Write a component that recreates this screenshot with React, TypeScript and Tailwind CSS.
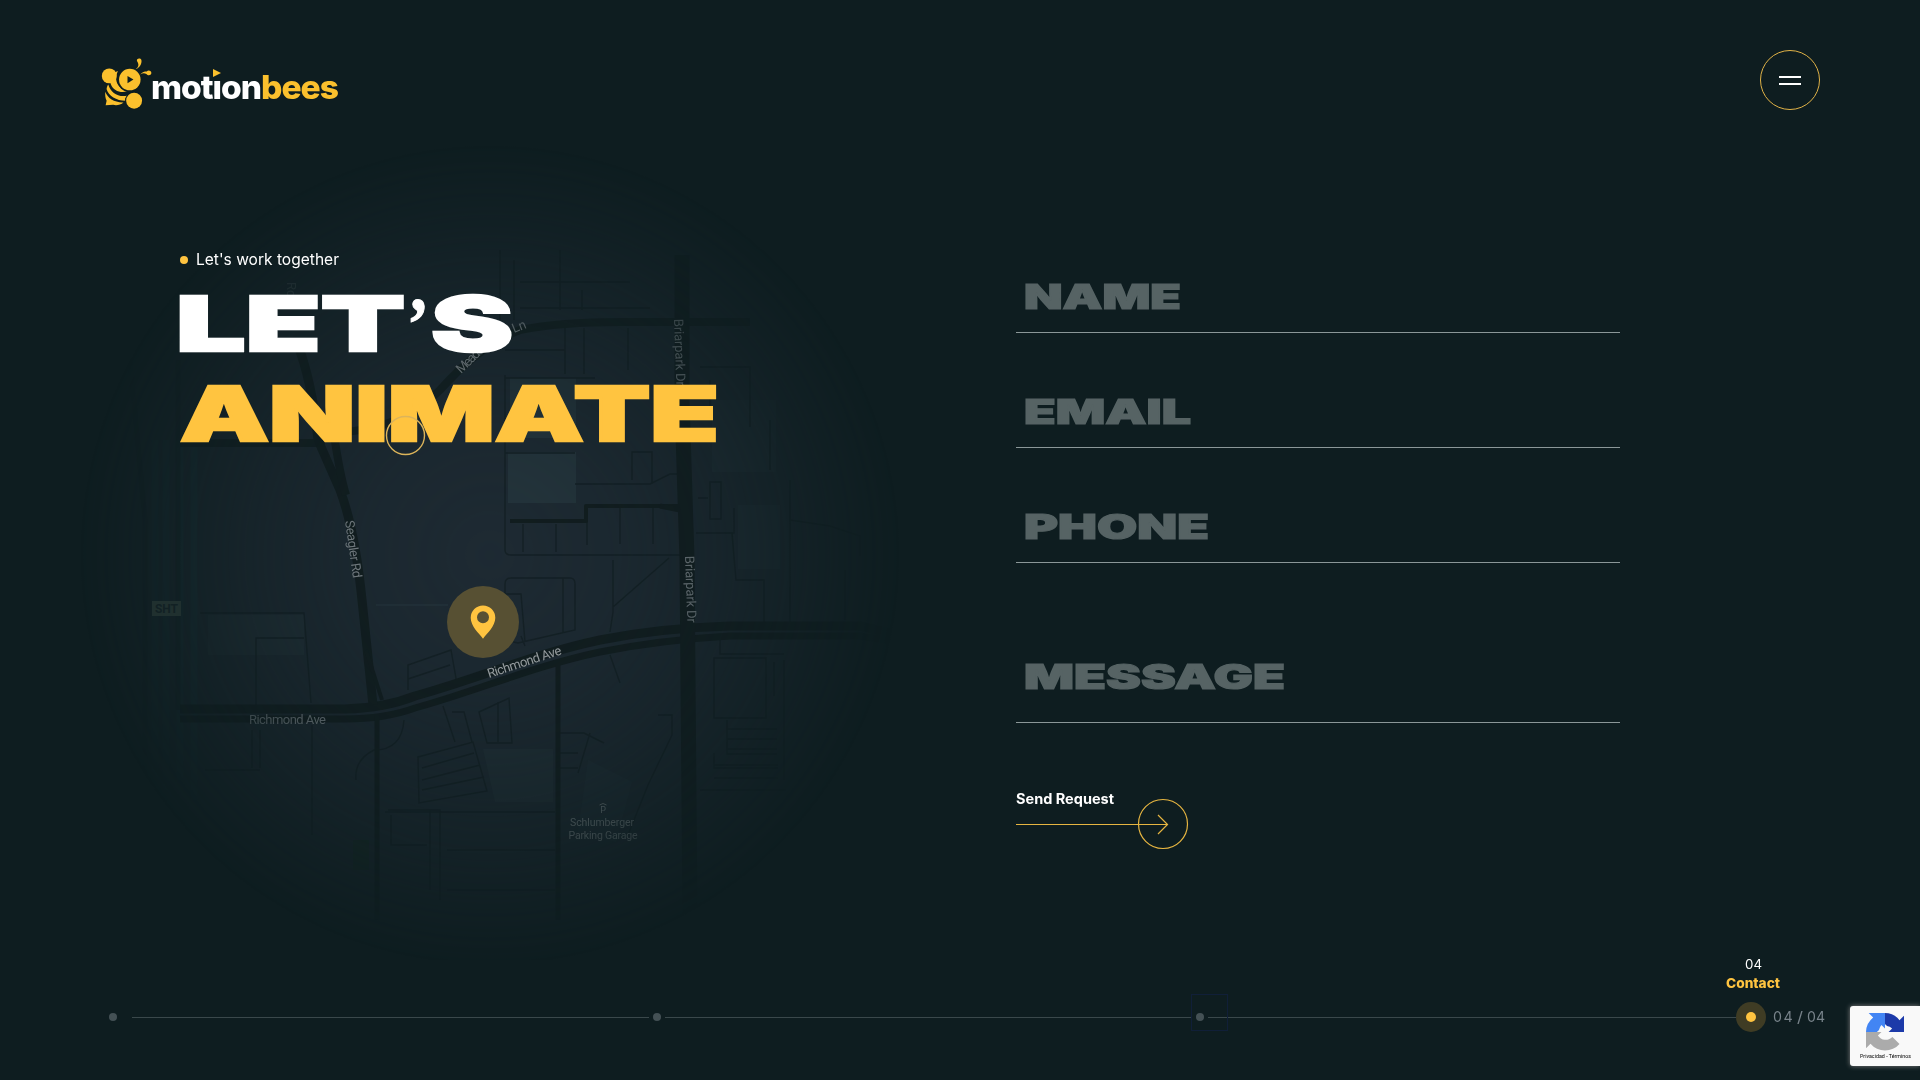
import { useLayoutEffect, useRef, type ReactNode } from "react";

/** Stretches its text horizontally so that it fills the width of its box. */
function Fit({ className, children }: { className: string; children: ReactNode }) {
  const box = useRef<HTMLSpanElement>(null);
  const text = useRef<HTMLSpanElement>(null);
  useLayoutEffect(() => {
    if (!box.current || !text.current) return;
    const scale = box.current.offsetWidth / text.current.getBoundingClientRect().width;
    text.current.style.transform = `scaleX(${scale})`;
  }, []);
  return (
    <span ref={box} className={`block shrink-0 whitespace-nowrap ${className}`}>
      <span ref={text} className="inline-block origin-left">
        {children}
      </span>
    </span>
  );
}

function Bee() {
  return (
    <svg viewBox="30 50 160 160" className="h-[53px] w-[53px]" fill="#fbc02d">
      <circle cx="58" cy="107" r="22.5" />
      <path d="M84 92 C64 99 57 116 63 133 C71 152 92 161 116 153 C96 149 84 138 80 124 C77 113 79 103 84 92 Z" />
      <path d="M55 133 C62 158 84 172 112 167 C107 172 104 176 107 182 C80 182 55 166 50 147 C50 142 52 137 55 133 Z" />
      <path d="M46 155 C53 175 74 188 101 187 C92 195 78 197 70 194 L47 196 L50 182 C46 174 45 165 46 155 Z" />
      <circle cx="133" cy="182" r="27" fill="#0e1d20" />
      <circle cx="133" cy="182" r="24" />
      <circle cx="120" cy="118" r="38" fill="#0e1d20" />
      <circle cx="120" cy="118" r="32.5" />
      <path d="M113 107 L131 118 L113 129 Z" fill="#0e1d20" />
      <path d="M137 87 C146 81 149 74 142 63 C138 54 152 51 155 59 C157 70 150 83 137 87 Z" />
      <path d="M151 103 C158 95 164 94 171 94 C175 88 186 91 185 99 C183 107 174 106 170 101 C163 98 158 99 151 103 Z" />
    </svg>
  );
}

function StreetMap() {
  return (
    <svg viewBox="80 120 860 840" className="absolute left-[80px] top-[120px] h-[840px] w-[860px] font-['Roboto']">
      <defs>
        <radialGradient id="fade" gradientUnits="userSpaceOnUse" cx="490" cy="555" r="410">
          <stop offset="0" stopColor="#fff" stopOpacity="0.95" />
          <stop offset="0.3" stopColor="#fff" stopOpacity="0.8" />
          <stop offset="0.6" stopColor="#fff" stopOpacity="0.5" />
          <stop offset="0.85" stopColor="#fff" stopOpacity="0.18" />
          <stop offset="1" stopColor="#fff" stopOpacity="0" />
        </radialGradient>
        <mask id="vignette" maskUnits="userSpaceOnUse" x="80" y="120" width="860" height="840">
          <rect x="80" y="120" width="860" height="840" fill="url(#fade)" />
        </mask>
      </defs>
      <g mask="url(#vignette)">
        <rect x="80" y="120" width="860" height="840" fill="#1f2b34" />
        <g fill="#26363e">
          <path d="M508 452h68v51h-68zM510 378h66v60h-66z" />
          <path d="M712 400h64v72h-64zM738 505h42v64h-42z" opacity="0.5" />
          <path d="M483 749h70v53h-58zM208 615h96v40h-96z" opacity="0.55" />
          <path d="M588 760l44 22-16 60-38-10z" opacity="0.4" />
        </g>
        <g fill="none" stroke="#152126" strokeWidth="1.4">
          <path d="M505 378h90M505 375v175q0 5 6 5h170M505 453h70M575 484h75l20-10h12M632 480v-28h20v32" />
          <path d="M523 524v28M556 524v28M587 520v25M620 508v36M653 508v36" />
          <path d="M505 640v-56q0-6 6-6h59q5 0 5 6v46l-57 13zM563 578v54M505 594h16l4 48M613 560v52l-3 20M613 607l56-49" />
          <path d="M610 655l10 28M525 646l-4-10" />
          <path d="M200 613h104l7 90M256 705v-67h48M260 730v38M252 730v38M312 725v110M205 770h55" />
          <path d="M408 690v-25l43-15 6 34M408 679l42-14M404 720q-2 30-30 30q-20 10-18 30" />
          <path d="M443 706l12 36M452 712h12l8 30M479 712l30-14 3 45h-25zM498 702v40" />
          <path d="M418 757l55-15 14 49-68 12zM422 768l52-15M422 780l58-15M422 790l62-13M388 810h52v90M391 815v30h36M430 810v80" />
          <path d="M385 812h170M447 850h108M447 890h108M560 733h24l20 10M560 753h18M560 768h18M590 733l-12 40" />
          <path d="M658 715h14v20l-24 50-20 50" />
          <path d="M710 482v37h11v-37zM698 498h10M696 533h38v-25M732 533l4 47h28v46M790 480v145M790 520l40 6 30 10v20M845 570v50" />
          <path d="M714 658v60h52v-60zM720 640v14h64M784 660v120M774 662v34M727 720v34h50M727 729h50M727 739h50M727 749h50M714 753v15h64M714 765h64M714 778h64M700 790h86" />
          <path d="M500 250v70M514 260v60M560 250v60M520 282h110M520 308h130M582 290v20M584 328v46M628 328v42M565 328v46M505 350h60M700 367h50v60M710 380v30M770 420v50" />
        </g>
        <g stroke="#1c343c" fill="none" strokeWidth="7" opacity="0.9">
          <path d="M155 440v360M194 430v370M166 440v350M180 440v340" />
        </g>
        <g stroke="#121d1f" fill="none" strokeLinejoin="round">
          <path d="M130 360l15 160v300M178 360v350" strokeWidth="5" opacity="0.5" />
          <path d="M180 709H345Q385 708 415 696C480 678 530 655 600 640Q660 628 730 626H860L920 640" strokeWidth="9" />
          <path d="M180 719H345Q385 719 415 708C480 690 530 667 600 652Q660 640 730 636H860L920 646" strokeWidth="7" />
          <path d="M296 340Q312 380 318 440L340 490Q355 530 362 600L373 705" strokeWidth="9" />
          <path d="M334 435q6 40 12 60" strokeWidth="8" />
          <path d="M366 650l16 50" strokeWidth="4" />
          <path d="M682 255V400L687 560L690 920" strokeWidth="15" />
          <path d="M377 715V920M558 665V920" strokeWidth="5" />
          <path d="M180 443h145M340 432Q400 430 440 390Q480 345 520 330Q560 322 620 322H750" strokeWidth="8" opacity="0.85" />
          <path d="M510 521h76v-15h92" strokeWidth="4" />
          <path d="M660 506l20 4" strokeWidth="5" />
        </g>
        <path d="M376 605h72" stroke="#2b3a42" strokeWidth="1" />
        <rect x="353" y="840" width="16" height="30" fill="#16301f" opacity="0.6" />
        <g fill="#8b9297" fontSize="13">
          <text transform="translate(345 521) rotate(82)" textLength="58">Seagler Rd</text>
          <text transform="translate(489 678) rotate(-18)" textLength="77" fill="#b4b8ba">Richmond Ave</text>
          <text x="249" y="724" textLength="77">Richmond Ave</text>
          <text transform="translate(685 556) rotate(88)" textLength="67">Briarpark Dr</text>
          <text transform="translate(674 319) rotate(88)" textLength="67">Briarpark Dr</text>
          <text transform="translate(461 374) rotate(-44)" textLength="42">Meadow</text>
          <text transform="translate(514 333) rotate(-22)">Ln</text>
          <text transform="translate(287 282) rotate(90)" opacity="0.5">Rd</text>
        </g>
        <g fill="#8a9396" fontSize="10.5" textAnchor="middle">
          <text x="603" y="813" fontSize="9">P</text>
          <path d="M599.5 805q3.500-3 7 0" fill="none" stroke="#7d8689" />
          <text x="602" y="826" textLength="64">Schlumberger</text>
          <text x="603" y="838.500" textLength="69">Parking Garage</text>
        </g>
      </g>
      <rect x="152" y="601" width="29" height="15" fill="#20302f" />
      <text x="155" y="613" fontSize="12" fontWeight="700" fill="#122124" textLength="23">SHT</text>
      <circle cx="483" cy="622" r="36" fill="#575033" />
      <path d="M483 605.500a12.300 12.300 0 0 0-12.300 12.300c0 8.500 8.300 15.500 12.300 21 4-5.500 12.300-12.500 12.300-21a12.300 12.300 0 0 0-12.300-12.300zm0 5.700a6 6 0 1 1 0 12 6 6 0 0 1 0-12z" fill="#ffc440" fillRule="evenodd" />
    </svg>
  );
}

function Recaptcha() {
  return (
    <aside className="absolute left-[1850px] top-[1006px] flex h-[60px] w-[70px] flex-col items-center rounded-l-[3px] bg-[#f9f9f9] pt-[7px] shadow-[0_0_5px_gray]">
      <svg viewBox="0 0 64 64" className="h-[38px] w-[38px]">
        <path fill="#1c3aa9" d="M64 32V4.500l-7.600 7.600A32 32 0 0 0 31.900 0v18.400l3.500 3.500A15.800 15.800 0 0 1 44 26L38 32z" />
        <path fill="#4285f4" d="M32 0H4.500l7.600 7.600A32 32 0 0 0 0 32h18.400l3.500-3.500A15.800 15.800 0 0 1 26 20l6 6z" />
        <path fill="#ababab" d="M0 32v27.500l7.600-7.600A32 32 0 0 0 56.400 52L44.500 40.500A15.800 15.800 0 0 1 20 38L26 32z" />
      </svg>
      <div className="mt-[1px] flex">
        <Fit className="w-[51px] font-['Roboto'] text-[6px] leading-[8px] text-black">Privacidad - Términos</Fit>
      </div>
    </aside>
  );
}

const display = "font-['Inter'] font-black";

const fields = [
  { label: "NAME", row: "h-[115px] pb-[11px]", width: "w-[157px]" },
  { label: "EMAIL", row: "h-[115px] pb-[11px]", width: "w-[167px]" },
  { label: "PHONE", row: "h-[115px] pb-[11px]", width: "w-[185px]" },
  { label: "MESSAGE", row: "h-[160px] pb-[21px]", width: "w-[261px]" },
];

export default function App() {
  return (
    <div className="relative flex h-[1080px] w-[1920px] flex-col overflow-hidden bg-[#0e1d20] font-['Inter'] text-white">
      <StreetMap />

      <header className="relative flex h-[218px] items-start justify-between pl-[100px] pr-[100px] pt-[50px]">
        <div className="flex pt-[7px]">
          <Bee />
          <div className="relative -ml-[2px] flex pt-[10px] text-[33px] font-extrabold leading-[40px] tracking-[-0.03em]">
            <Fit className="w-[110px]">motion</Fit>
            <Fit className="w-[77px] text-[#fbc02d]">bees</Fit>
            <span className="absolute left-[60px] top-[9px] flex h-[14px] w-[11px] items-center justify-center bg-[#0e1d20]">
              <svg viewBox="0 0 8 8" className="h-[8px] w-[8px]">
                <path d="M0 0L8 4L0 8Z" fill="#fbc02d" />
              </svg>
            </span>
          </div>
        </div>
        <button className="flex h-[60px] w-[60px] flex-col items-center justify-center gap-[5px] rounded-full border border-[#e0b247]">
          <span className="mt-px h-[2px] w-[22px] bg-white" />
          <span className="h-[2px] w-[22px] bg-white" />
        </button>
      </header>

      <main className="relative flex h-[682px] pl-[180px]">
        <section className="w-[836px] pt-[29px]">
          <p className="flex items-center text-[15.5px] leading-6">
            <span className="mr-[8px] h-2 w-2 rounded-full bg-[#ffc440]" />
            <Fit className="w-[143px] pt-px">Let's work together</Fit>
          </p>
          <h1 className={`mt-[7px] text-[75px] leading-[90px] [-webkit-text-stroke:2.500px_currentColor] ${display}`}>
            <span className="flex">
              <Fit className="-ml-[4px] w-[229px]">LET</Fit>
              <Fit className="ml-[2px] w-[22px] font-['Liberation_Serif'] font-bold [-webkit-text-stroke:1px_currentColor]">’</Fit>
              <Fit className="ml-[2px] w-[82px]">S</Fit>
            </span>
            <Fit className="w-[539px] text-[#ffc440]">ANIMATE</Fit>
          </h1>
        </section>

        <form className="w-[604px]">
          {fields.map((f) => (
            <label key={f.label} className={`flex items-end border-b border-[#8b9798] pl-[8px] ${f.row}`}>
              <Fit className={`text-[33.5px] leading-[48px] text-[#566364] [-webkit-text-stroke:1.200px_currentColor] ${display} ${f.width}`}>
                {f.label}
              </Fit>
            </label>
          ))}
          <button type="button" className="mt-[66px] block text-left">
            <Fit className="w-[98px] text-[14px] font-bold leading-5">Send Request</Fit>
            <svg viewBox="0 0 174 52" className="-mt-[11px] block h-[52px] w-[174px]" fill="none" stroke="#e6b541" strokeWidth="1.200">
              <path d="M0 26.500H151M142 17l9.500 9.500-9.500 9.500" />
              <circle cx="147" cy="26" r="24.500" />
            </svg>
          </button>
        </form>
      </main>

      <footer className="relative flex h-[180px] items-start pl-[109px] pt-[101px]">
        <div className="flex h-[31px] items-center">
          <span className="h-2 w-2 rounded-full bg-[#445155]" />
          <span className="ml-[15px] mt-px h-px w-[517px] bg-[#3a484b]" />
          <span className="ml-[4px] h-2 w-2 rounded-full bg-[#445155]" />
          <span className="ml-[4px] mt-px h-px w-[527px] bg-[#3a484b]" />
          <span className="ml-[4px] h-2 w-2 rounded-full bg-[#445155]" />
          <span className="ml-[4px] mt-px h-px w-[528px] bg-[#3a484b]" />
          <span className="relative flex h-[30px] w-[30px] items-center justify-center rounded-full bg-[#3f3c24]">
            <span className="h-[10px] w-[10px] rounded-full bg-[#ffc440]" />
            <span className="absolute -top-[47px] left-[-10px] flex w-[54px] flex-col items-center text-[13px]">
              <Fit className="w-[17px] leading-[19px]">04</Fit>
              <Fit className="w-[54px] font-extrabold leading-[19px] text-[#ffc440]">Contact</Fit>
            </span>
          </span>
          <span className="ml-[7px] flex text-[15px] leading-5 text-[#78838a]">
            <Fit className="w-[21px] tracking-[0.1em]">04</Fit>
            <Fit className="ml-[3px] w-[6px]">/</Fit>
            <Fit className="ml-[4px] w-[18px]">04</Fit>
          </span>
        </div>
      </footer>

      <svg viewBox="0 0 42 42" className="absolute left-[384px] top-[414px] h-[42px] w-[42px]" fill="none">
        <circle cx="21.500" cy="21.500" r="19" stroke="#dcb45a" strokeWidth="1.400" />
      </svg>
      <span className="absolute left-[1191px] top-[994px] h-[37px] w-[37px] border border-[#101f38]" />
      <Recaptcha />
    </div>
  );
}
